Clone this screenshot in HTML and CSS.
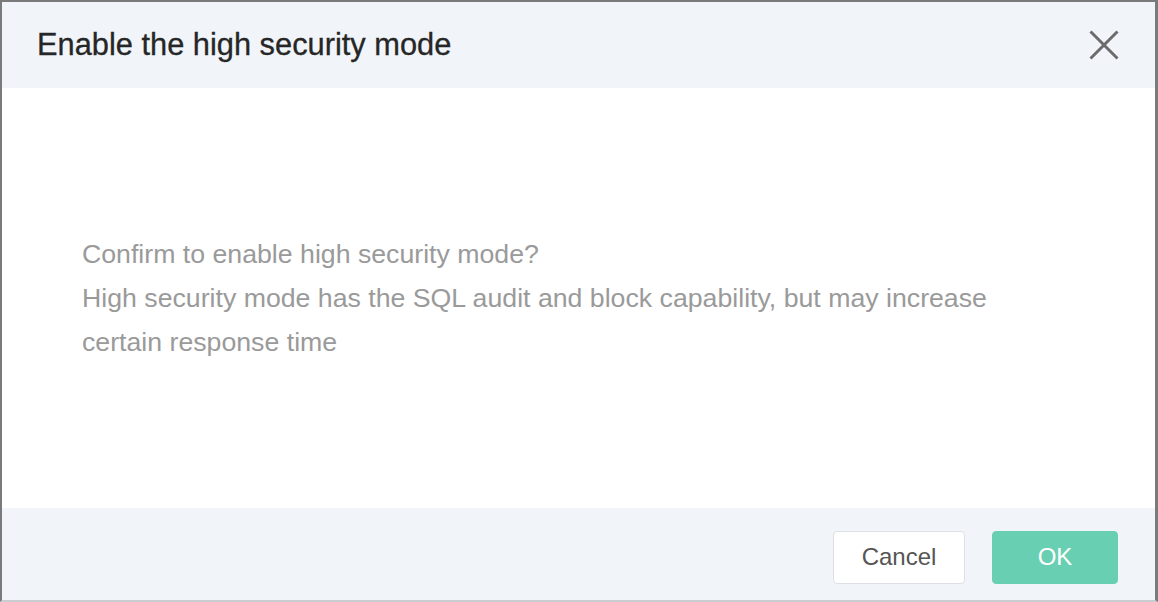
FILE: index.html
```html
<!DOCTYPE html>
<html>
<head>
<meta charset="utf-8">
<link rel="stylesheet" href="styles.css">
</head>
<body>
<div class="dialog">
  <div class="header">
    <span class="title">Enable the high security mode</span>
    <button class="close" aria-label="Close">
      <svg width="32" height="32" viewBox="0 0 32 32"><path d="M2.5 2.5 L29.5 29.5 M29.5 2.5 L2.5 29.5" stroke="#6b6b6b" stroke-width="3" fill="none"/></svg>
    </button>
  </div>
  <div class="body">
    <p class="msg">Confirm to enable high security mode?<br>High security mode has the SQL audit and block capability, but may increase<br>certain response time</p>
  </div>
  <div class="footer">
    <button class="btn btn-cancel">Cancel</button>
    <button class="btn btn-ok">OK</button>
  </div>
</div>
</body>
</html>
```
FILE: styles.css
```css
html, body {
  margin: 0;
  padding: 0;
  height: 100%;
}
body {
  font-family: "Liberation Sans", Arial, sans-serif;
  background: #fff;
}
.dialog {
  box-sizing: border-box;
  height: 602px;
  width: 1158px;
  border-top: 2px solid #7a7a7a;
  border-left: 2px solid #7a7a7a;
  border-right: 3px solid #7a7a7a;
  border-bottom: 2px solid #c9ccd1;
  display: flex;
  flex-direction: column;
}
.header {
  height: 86px;
  background: #f1f5fa;
  display: flex;
  align-items: center;
  justify-content: space-between;
  padding: 0 35px 0 35px;
}
.title {
  font-size: 30.8px;
  color: #262626;
  -webkit-text-stroke: 0.3px #262626;
}
.close {
  border: 0;
  background: none;
  padding: 0;
  display: flex;
}
.body {
  flex: 1;
  display: flex;
  align-items: center;
  padding: 0 80px;
}
.msg {
  margin: 0;
  font-size: 26.7px;
  line-height: 44px;
  color: #9a9a9a;
}
.footer {
  box-sizing: border-box;
  height: 92px;
  background: #f1f5fa;
  display: flex;
  align-items: center;
  justify-content: flex-end;
  gap: 27px;
  padding: 6px 37px 0 0;
}
.btn {
  font-family: "Liberation Sans", Arial, sans-serif;
  font-size: 24px;
  border-radius: 4px;
  height: 53px;
  cursor: pointer;
}
.btn-cancel {
  width: 132px;
  background: #fff;
  border: 1px solid #dcdfe5;
  color: #555;
}
.btn-ok {
  width: 126px;
  background: #69cfb3;
  border: 1px solid #69cfb3;
  color: #fff;
}
```
